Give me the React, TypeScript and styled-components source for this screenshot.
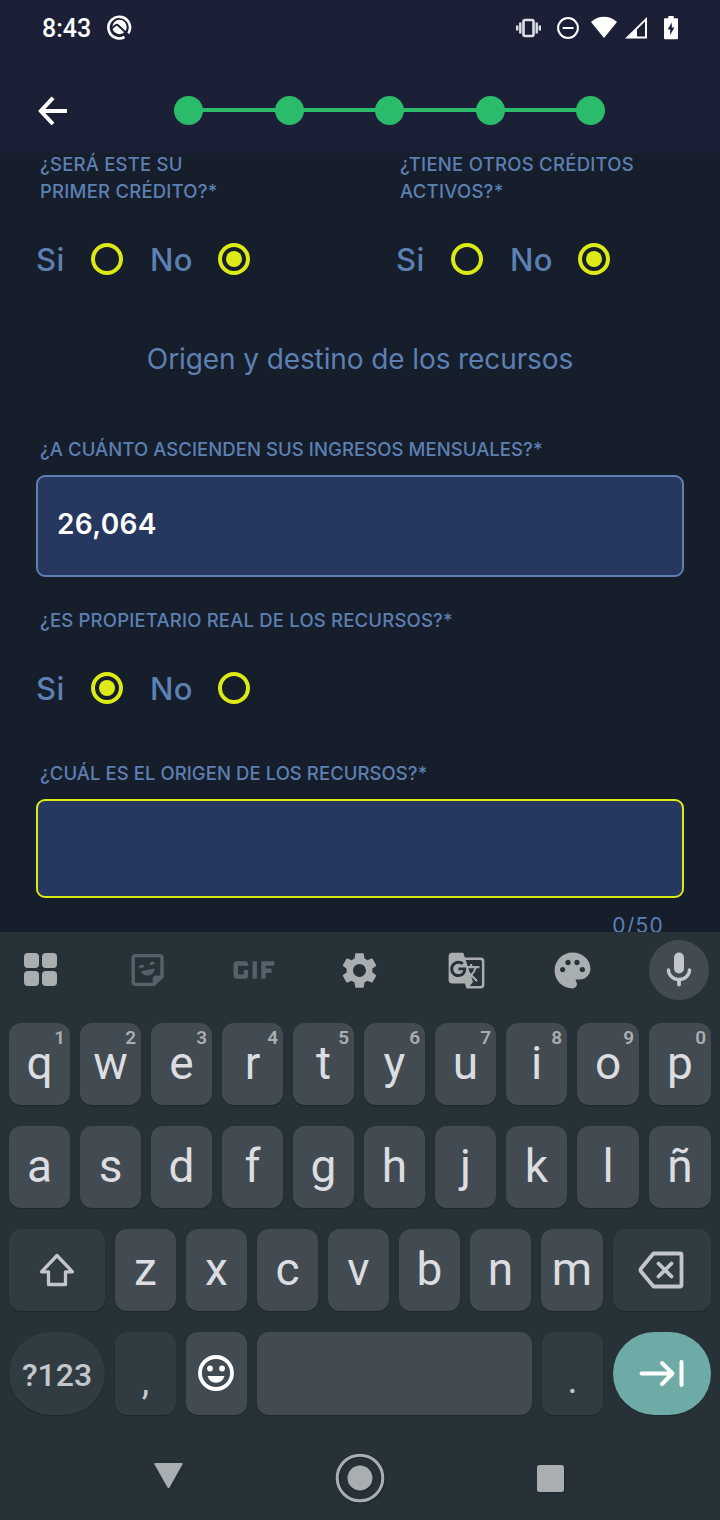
import React from "react";
import styled, { createGlobalStyle } from "styled-components";
import { MdSettings, MdPalette, MdGTranslate, MdGif } from "react-icons/md";

const color = {
  header: "#1c2036",
  body: "#161d2b",
  field: "#263860",
  blue: "#5d80b3",
  yellow: "#dcea16",
  green: "#2abc6b",
  keyboard: "#273238",
  key: "#424a52",
  modKey: "#313b42",
  teal: "#6eaba6",
  letter: "#dcdde0",
  icon: "#a9aeb1",
  modIcon: "#c3c6ca",
  dim: "#566169",
};

const GlobalStyle = createGlobalStyle`
  * { box-sizing: border-box; }
  body { margin: 0; background: ${color.body}; }
  svg { display: block; flex: none; }
`;

const Screen = styled.div`
  width: 720px;
  height: 1520px;
  display: flex;
  flex-direction: column;
  overflow: hidden;
  background: ${color.body};
  font-family: Inter, "Liberation Sans", sans-serif;
`;

const Header = styled.header`
  height: 153px;
  flex: none;
  background: ${color.header};
`;

const StatusBar = styled.div`
  height: 56px;
  padding: 0 42px;
  display: flex;
  align-items: center;
  justify-content: space-between;
  color: #fff;
`;

const StatusLeft = styled.div`
  display: flex;
  align-items: center;
  gap: 16px;
`;

const Clock = styled.span`
  width: 49px;
  padding-top: 2px;
  font: 500 25px/30px Roboto, sans-serif;
  white-space: nowrap;
`;

const AppBadge = styled.svg`
  margin-top: -2px;
`;

const StatusRow = styled.div`
  display: flex;
  align-items: center;
`;

const StatusIcon = styled.svg<{ $gap: number }>`
  margin-left: ${(p) => p.$gap}px;
`;

const NavRow = styled.div`
  height: 108px;
  display: flex;
  align-items: center;
  padding-left: 38px;
`;

const Stepper = styled.div`
  width: 431px;
  margin-left: 107px;
  display: flex;
  align-items: center;
`;

const Dot = styled.span`
  width: 29px;
  height: 29px;
  flex: none;
  border-radius: 50%;
  background: ${color.green};
`;

const Line = styled.span`
  flex: 1;
  height: 3.5px;
  margin: 0 -1px;
  background: ${color.green};
`;

const Form = styled.main`
  height: 779px;
  flex: none;
  padding: 0 36px;
  overflow: hidden;
`;

const Columns = styled.div`
  display: grid;
  grid-template-columns: 360px 1fr;
`;

const Label = styled.div<{ $top: number; $spacing: number }>`
  margin-top: ${(p) => p.$top}px;
  padding-left: 4px;
  font-size: 18.5px;
  line-height: 27px;
  font-weight: 500;
  letter-spacing: ${(p) => p.$spacing}px;
  color: ${color.blue};
  white-space: nowrap;
`;

const RadioRow = styled.div<{ $top: number }>`
  margin-top: ${(p) => p.$top}px;
  height: 34px;
  display: flex;
  align-items: center;
`;

const Option = styled.span<{ $width: number }>`
  width: ${(p) => p.$width}px;
  padding-top: 2px;
  font-size: 31px;
  line-height: 34px;
  font-weight: 500;
  letter-spacing: 0.4px;
  color: ${color.blue};
`;

const Radio = styled.span<{ $on?: boolean }>`
  width: 32px;
  height: 32px;
  margin-right: 26.5px;
  flex: none;
  display: grid;
  place-items: center;
  border: 4px solid ${color.yellow};
  border-radius: 50%;
  &::after {
    content: "";
    width: 16px;
    height: 16px;
    border-radius: 50%;
    background: ${(p) => (p.$on ? color.yellow : "transparent")};
  }
`;

const Title = styled.h2`
  margin: 65px 0 0;
  height: 36px;
  font-size: 28px;
  line-height: 36px;
  font-weight: 400;
  letter-spacing: -0.1px;
  text-align: center;
  color: ${color.blue};
  white-space: nowrap;
`;

const Field = styled.div<{ $height: number; $focus?: boolean }>`
  margin-top: 12px;
  height: ${(p) => p.$height}px;
  padding: 29px 19px 0;
  border: 2px solid ${(p) => (p.$focus ? color.yellow : color.blue)};
  border-radius: 9px;
  background: ${color.field};
  font-size: 28px;
  line-height: 36px;
  font-weight: 600;
  letter-spacing: 0.35px;
  color: #fff;
`;

const Counter = styled.div`
  margin-top: 13px;
  padding-right: 20px;
  text-align: right;
  font-size: 21px;
  line-height: 30px;
  letter-spacing: 1.2px;
  color: ${color.blue};
`;

const Keyboard = styled.section`
  flex: 1;
  background: ${color.keyboard};
  font-family: Roboto, sans-serif;
`;

const Toolbar = styled.div`
  height: 91px;
  padding: 8px 11px 0 11px;
  display: flex;
  justify-content: space-between;
  color: ${color.icon};
`;

const Tool = styled.span<{ $dim?: boolean; $round?: boolean }>`
  width: 60px;
  height: 60px;
  display: flex;
  align-items: center;
  justify-content: center;
  border-radius: 50%;
  color: ${(p) => (p.$dim ? color.dim : "inherit")};
  background: ${(p) => (p.$round ? color.key : "none")};
`;

const Keys = styled.div`
  padding: 0 9px;
  display: grid;
  row-gap: 21px;
`;

const KeyRow = styled.div<{ $columns: string; $height?: number }>`
  height: ${(p) => p.$height ?? 82}px;
  display: grid;
  grid-template-columns: ${(p) => p.$columns};
  column-gap: 10px;
`;

const KeyCap = styled.div<{ $kind?: "mod" | "pill" | "action" }>`
  position: relative;
  display: flex;
  align-items: center;
  justify-content: center;
  border-radius: ${(p) => (p.$kind === "pill" || p.$kind === "action" ? 42 : 12)}px;
  background: ${(p) =>
    p.$kind === "action" ? color.teal : p.$kind ? color.modKey : color.key};
  box-shadow: 0 1px 1px #1d262b;
  color: ${(p) => (p.$kind ? color.modIcon : color.letter)};
  font-size: 46px;
  line-height: 46px;
`;

const Letter = styled.span`
  padding-bottom: 2px;
`;

const Hint = styled.span`
  position: absolute;
  top: 4px;
  right: 5px;
  font-size: 19px;
  line-height: 22px;
  font-weight: 600;
  color: ${color.icon};
`;

const ModeText = styled.span`
  padding-top: 3px;
  font-size: 32px;
  font-weight: 500;
  line-height: 40px;
`;

const Punctuation = styled.span<{ $top: number }>`
  padding-top: ${(p) => p.$top}px;
  font-size: 38px;
  line-height: 44px;
`;

const SystemNav = styled.nav`
  height: 105px;
  padding: 21px 156px 0 154px;
  display: grid;
  grid-template-columns: 29px 1fr 27px;
  align-items: center;
  justify-items: center;
`;

const NavIcon = styled.svg<{ $lift?: number }>`
  margin-bottom: ${(p) => p.$lift ?? 0}px;
  filter: drop-shadow(1px 1px 1px #1d262b);
`;

function YesNo({ top, value }: { top: number; value: "si" | "no" }) {
  return (
    <RadioRow $top={top}>
      <Option $width={55.4}>Si</Option>
      <Radio $on={value === "si"} />
      <Option $width={67.8}>No</Option>
      <Radio $on={value === "no"} />
    </RadioRow>
  );
}

const TEN = "repeat(8, 61px) 62px 62px";

export default function App() {
  return (
    <Screen>
      <GlobalStyle />
      <Header>
        <StatusBar>
          <StatusLeft>
            <Clock>8:43</Clock>
            <AppBadge width="25" height="26" viewBox="0 0 25 26" fill="none">
              <path d="M17.5 23A10.8 10.8 0 1 1 20.9 20" stroke="#fff" strokeWidth="2.6" />
              <circle cx="12.5" cy="13" r="7.2" fill="#fff" />
              <path d="M4.5 14.5L8.6 11.2q1.3-1 2.6.2L21.6 21" stroke={color.header} strokeWidth="2" />
            </AppBadge>
          </StatusLeft>
          <StatusRow>
            <StatusIcon $gap={0} width="25" height="20" viewBox="0 0 25 20" fill="none" stroke="#dfe0e4" strokeWidth="2.4">
              <rect x="7.5" y="2" width="10" height="16" rx="1.5" strokeWidth="2.6" />
              <path d="M4.3 4.5v11M20.7 4.5v11M1.2 7.5v5M23.8 7.5v5" />
            </StatusIcon>
            <StatusIcon $gap={16} width="22" height="22" viewBox="0 0 22 22" fill="none" stroke="#fff" strokeWidth="2">
              <circle cx="11" cy="11" r="9.9" />
              <path d="M5.7 11h10.8" />
            </StatusIcon>
            <StatusIcon $gap={12} width="26" height="24" viewBox="0 0 26 24">
              <path d="M0 6C7.3-1.1 18.7-1.1 26 6L13 22z" fill="#fff" />
            </StatusIcon>
            <StatusIcon $gap={8} width="22" height="22" viewBox="0 0 22 22" fill="#fff">
              <path fillRule="evenodd" d="M0 21.5L22 0v21.5zM12 12.5V19.5h8V4.5z" />
            </StatusIcon>
            <StatusIcon $gap={17} width="14" height="24" viewBox="0 0 14 24">
              <path d="M4.3 0h5.4v2.2H13q1 0 1 1v19q0 1-1 1H1q-1 0-1-1v-19q0-1 1-1h3.3z" fill="#fff" />
              <path d="M7.8 6.5v5h2.6L6.2 19v-5.5H3.7z" fill={color.header} />
            </StatusIcon>
          </StatusRow>
        </StatusBar>
        <NavRow>
          <svg width="29" height="30" viewBox="0 0 29 30" fill="none" stroke="#fff" strokeWidth="4">
            <path d="M29 16H3.5M15 2.8L2.8 16 15 29" />
          </svg>
          <Stepper>
            <Dot /><Line /><Dot /><Line /><Dot /><Line /><Dot /><Line /><Dot />
          </Stepper>
        </NavRow>
      </Header>

      <Form>
        <Columns>
          <div>
            <Label $top={-2} $spacing={0.22}>¿SERÁ ESTE SU<br />PRIMER CRÉDITO?*</Label>
            <YesNo top={37} value="no" />
          </div>
          <div>
            <Label $top={-2} $spacing={0.27}>¿TIENE OTROS CRÉDITOS<br />ACTIVOS?*</Label>
            <YesNo top={37} value="no" />
          </div>
        </Columns>
        <Title>Origen y destino de los recursos</Title>
        <Label $top={59} $spacing={0.07}>¿A CUÁNTO ASCIENDEN SUS INGRESOS MENSUALES?*</Label>
        <Field $height={102}>26,064</Field>
        <Label $top={30} $spacing={0.19}>¿ES PROPIETARIO REAL DE LOS RECURSOS?*</Label>
        <YesNo top={37} value="si" />
        <Label $top={55} $spacing={0.06}>¿CUÁL ES EL ORIGEN DE LOS RECURSOS?*</Label>
        <Field $height={99} $focus />
        <Counter>0/50</Counter>
      </Form>

      <Keyboard>
        <Toolbar>
          <Tool>
            <svg width="34" height="34" viewBox="0 0 34 34" fill="currentColor">
              <rect x="0" y="0" width="15" height="15" rx="4" />
              <rect x="18" y="0" width="15" height="15" rx="4" />
              <rect x="0" y="18" width="15" height="15" rx="4" />
              <rect x="18" y="18" width="15" height="15" rx="4" />
            </svg>
          </Tool>
          <Tool $dim>
            <svg width="32" height="32" viewBox="-0.6 0 32 32" overflow="visible" fill="none" stroke="currentColor" strokeWidth="3.4">
              <path d="M4 1.6h24q2.400 0 2.400 2.400v18.500l-8 7.900H4Q1.600 30.400 1.600 28V4Q1.600 1.600 4 1.600z" />
              <path d="M21 31v-6q0-3.500 3.500-3.500H31L21.500 31z" fill="currentColor" stroke="none" />
              <path d="M9.200 17.200l13.800-2.800q-.8 6.800-7 7.100-4.200 0-6.800-4.300z" fill="currentColor" stroke="none" />
              <path d="M7.300 14.200q0-3.200 2.700-3.700 2.200 0 3 2.400zM18 11.200q.2-3.300 2.700-3.700 2.200 0 2.800 2.500z" fill="currentColor" stroke="none" />
            </svg>
          </Tool>
          <Tool $dim><MdGif size={70} /></Tool>
          <Tool><MdSettings size={43} /></Tool>
          <Tool><MdGTranslate size={39} /></Tool>
          <Tool><MdPalette size={43} /></Tool>
          <Tool $round>
            <svg width="26" height="36" viewBox="0 0 26 36" fill="none" stroke={color.modIcon}>
              <rect x="8" y="0.5" width="10" height="21" rx="5" fill={color.modIcon} stroke="none" />
              <path d="M2.5 18a10.5 9.5 0 0 0 21 0" strokeWidth="3.4" strokeLinecap="round" />
              <path d="M13 28v4.500" strokeWidth="3.8" strokeLinecap="round" />
            </svg>
          </Tool>
        </Toolbar>
        <Keys>
          <KeyRow $columns={TEN}>
            {"qwertyuiop".split("").map((k, i) => (
              <KeyCap key={k}><Letter>{k}</Letter><Hint>{(i + 1) % 10}</Hint></KeyCap>
            ))}
          </KeyRow>
          <KeyRow $columns={TEN}>
            {"asdfghjklñ".split("").map((k) => <KeyCap key={k}><Letter>{k}</Letter></KeyCap>)}
          </KeyRow>
          <KeyRow $columns="96px repeat(6, 61px) 62px 98px">
            <KeyCap $kind="mod">
              <svg width="36" height="34" viewBox="0 0 36 34" fill="none" stroke="currentColor" strokeWidth="3.3" strokeLinejoin="round">
                <path d="M18 2.5L2.5 18.8H9.5V31.5h17V18.8h7z" />
              </svg>
            </KeyCap>
            {"zxcvbnm".split("").map((k) => <KeyCap key={k}><Letter>{k}</Letter></KeyCap>)}
            <KeyCap $kind="mod">
              <svg width="48" height="38" viewBox="0 0 48 38" fill="none" stroke="currentColor" strokeWidth="3.8" strokeLinejoin="round" strokeLinecap="round">
                <path d="M15.5 2.5H42q1.5 0 1.5 1.5v30q0 1.5-1.5 1.5H15.5L3 20.5q-1-1.5 0-3z" />
                <path d="M20.5 12.5l13 13M33.5 12.5l-13 13" />
              </svg>
            </KeyCap>
          </KeyRow>
          <KeyRow $columns="96px 61px 61px 275px 61px 98px" $height={83}>
            <KeyCap $kind="pill"><ModeText>?123</ModeText></KeyCap>
            <KeyCap $kind="mod"><Punctuation $top={14}>,</Punctuation></KeyCap>
            <KeyCap>
              <svg width="37" height="37" viewBox="0 0 37 37" fill="#fff">
                <circle cx="18" cy="18" r="16" fill="none" stroke="#fff" strokeWidth="3.8" />
                <circle cx="12" cy="13.5" r="2.9" />
                <circle cx="24" cy="13.5" r="2.9" />
                <path d="M9.5 21h17q-2 6.8-8.5 6.8T9.5 21z" />
              </svg>
            </KeyCap>
            <KeyCap />
            <KeyCap $kind="mod"><Punctuation $top={13}>.</Punctuation></KeyCap>
            <KeyCap $kind="action">
              <svg width="48" height="28" viewBox="0.5 0.5 48 28" fill="none" stroke="#fff" strokeWidth="4" strokeLinecap="round" strokeLinejoin="round">
                <path d="M4 14h30M24.5 3.5L35 14 24.5 24.5M44 2.5v23" />
              </svg>
            </KeyCap>
          </KeyRow>
        </Keys>
        <SystemNav>
          <NavIcon $lift={4} width="29" height="27" viewBox="0 0 29 27" fill={color.icon}>
            <path d="M1.5 0h26q1.800 0 1 1.500L15.500 24.500q-1 1.500-2 0L.5 1.500Q-.3 0 1.500 0z" />
          </NavIcon>
          <NavIcon width="50" height="50" viewBox="0 0 50 50" fill={color.icon}>
            <circle cx="25" cy="25" r="22.8" fill="none" stroke={color.icon} strokeWidth="3" />
            <circle cx="25" cy="25" r="12.5" />
          </NavIcon>
          <NavIcon width="27" height="27" viewBox="0 0 27 27" fill={color.icon}>
            <rect width="27" height="27" rx="2.5" />
          </NavIcon>
        </SystemNav>
      </Keyboard>
    </Screen>
  );
}
